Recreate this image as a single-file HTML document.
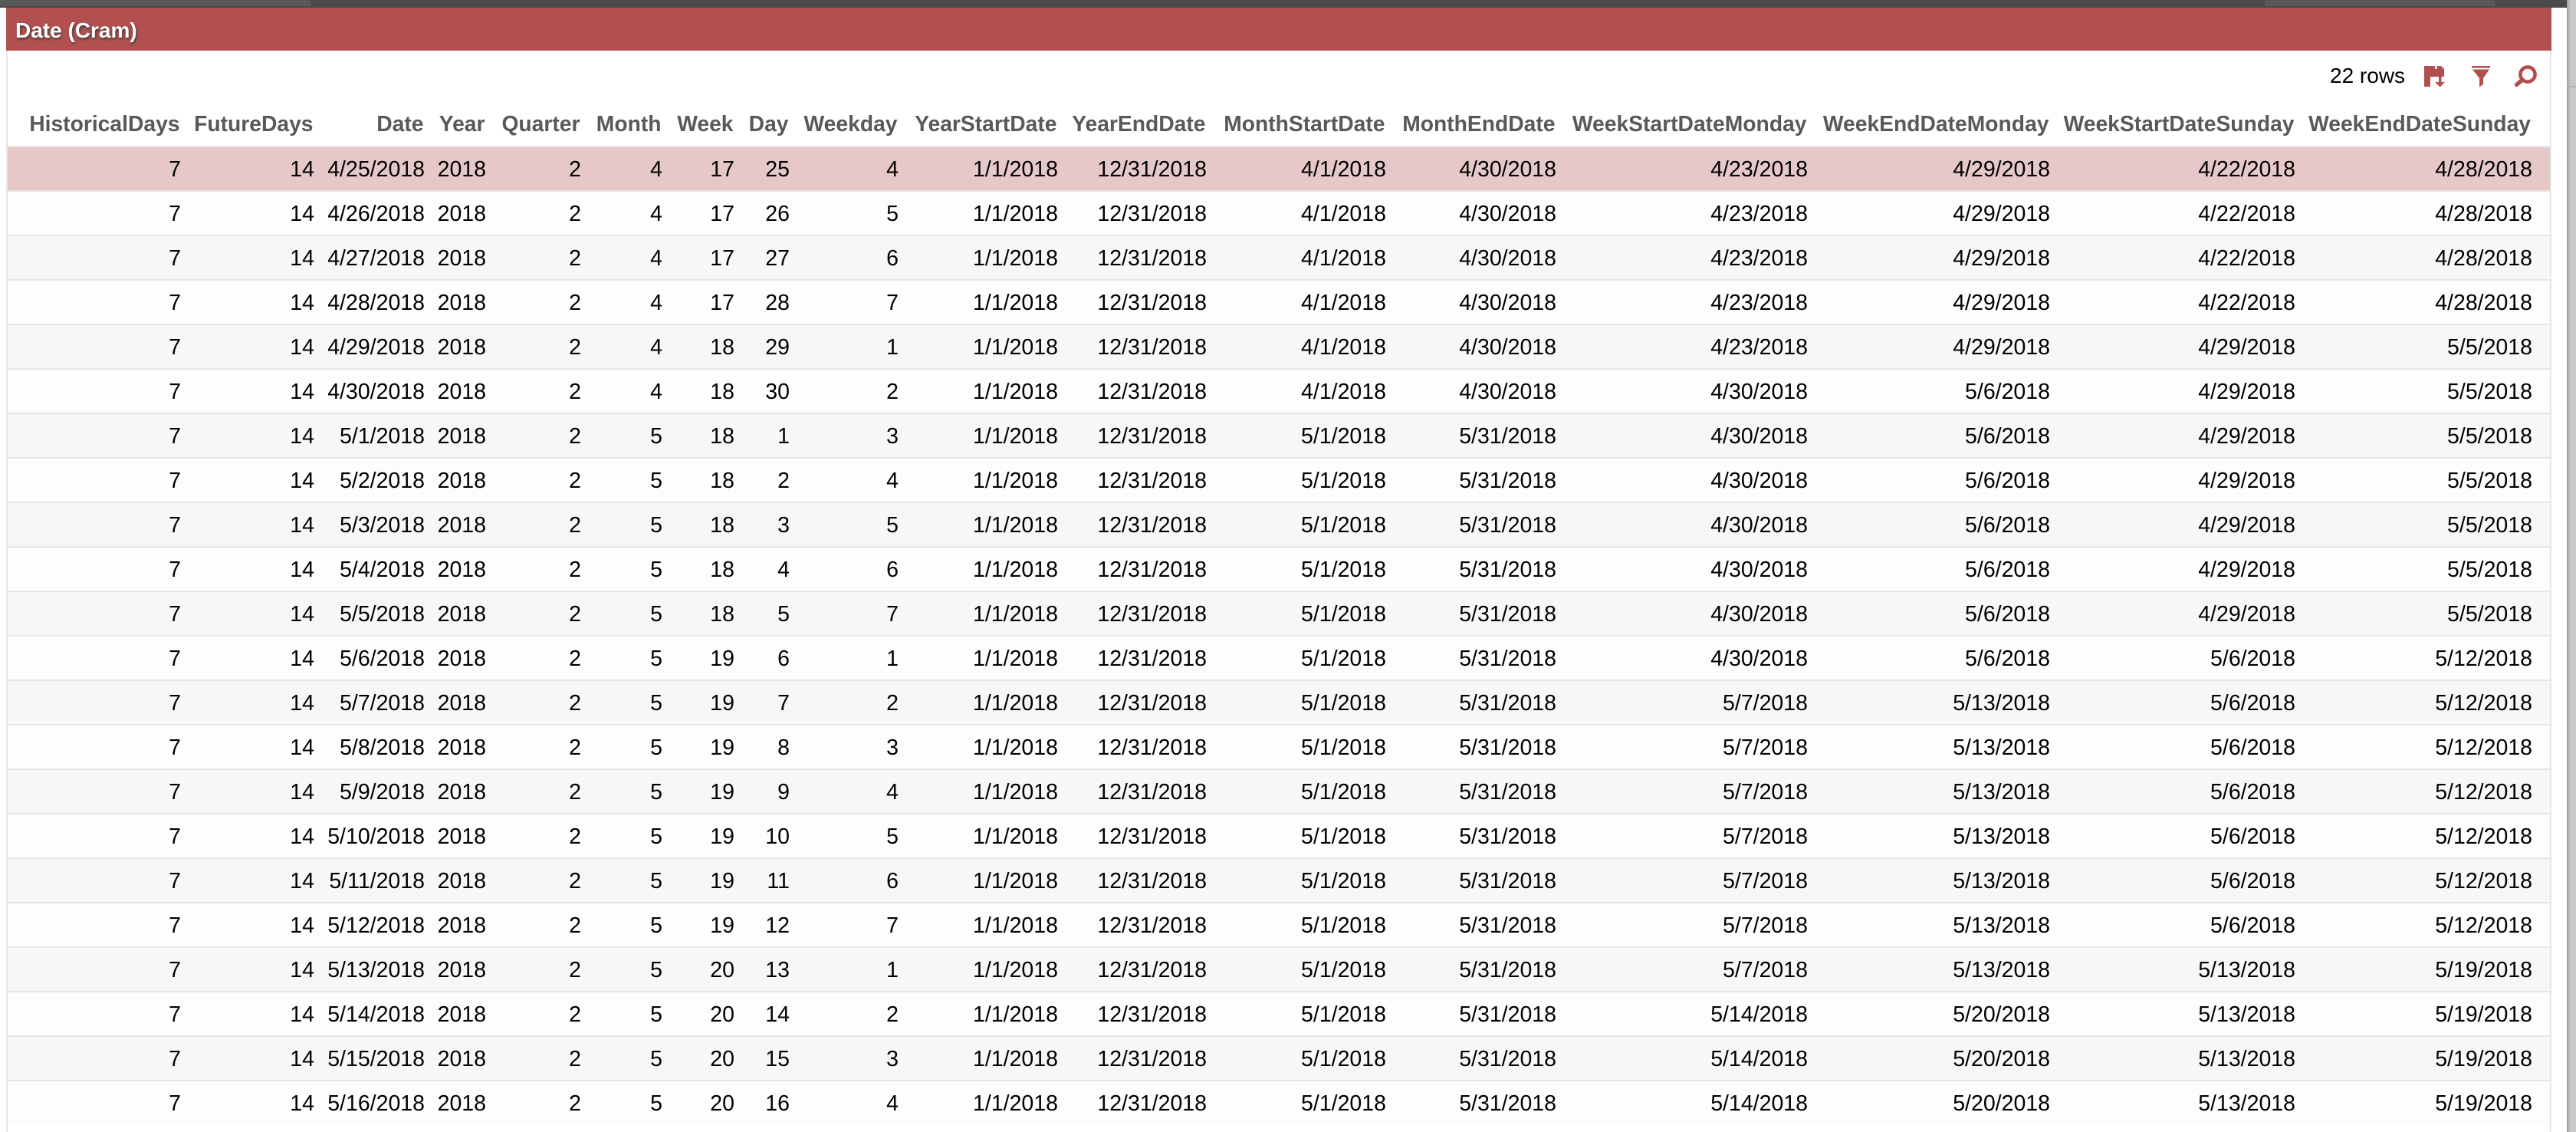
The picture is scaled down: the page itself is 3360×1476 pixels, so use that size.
<!DOCTYPE html>
<html><head><meta charset="utf-8"><title>Date (Cram)</title>
<style>
html,body{margin:0;padding:0;width:3360px;height:1476px;overflow:hidden;background:#fff;font-family:"Liberation Sans",Arial,sans-serif}
.a{position:absolute}
table{position:absolute;left:10px;top:130px;width:3316px;table-layout:fixed;border-collapse:separate;border-spacing:0}
th{height:60px;padding:2px 8.5px 0 0;text-align:right;font-size:28.25px;font-weight:bold;color:#595959;white-space:nowrap;box-sizing:border-box}
td{height:58px;padding:2px 7px 0 0;border-top:2px solid #e6e6e6;text-align:right;font-size:28.5px;color:#000;white-space:nowrap;box-sizing:border-box;background:#fdfdfd}
th:last-child{padding-right:25px}
td:last-child{padding-right:23px}
tbody tr:nth-child(odd) td{background:#f7f7f7}
tbody tr:first-child td{background:#e7c8c9}
</style></head><body>
<div class="a" style="left:0;top:0;width:3348px;height:10px;background:#4a4a4a"></div>
<div class="a" style="left:0;top:0;width:405px;height:8px;background:#595959"></div>
<div class="a" style="left:2954px;top:0;width:300px;height:8px;background:#595959"></div>
<div class="a" style="left:3348px;top:0;width:12px;height:1476px;background:linear-gradient(90deg,#999 0,#bbb 3px,#c9c9c9 6px,#c9c9c9 100%)"></div>
<div class="a" style="left:3348px;top:112px;width:12px;height:2px;background:#b4b4b4"></div>
<div class="a" style="left:8px;top:10px;width:3320px;height:56px;background:#b25050"></div>
<div class="a" style="left:20px;top:24px;height:32px;line-height:32px;font-size:28px;font-weight:bold;color:#fff;text-shadow:1px 2px 3px #3a3a3a;white-space:nowrap">Date (Cram)</div>
<div class="a" style="left:8px;top:66px;width:2px;height:1410px;background:#e6e6e6"></div>
<div class="a" style="left:3326px;top:66px;width:2px;height:1410px;background:#e6e6e6"></div>
<div class="a" style="left:3039px;top:83px;line-height:32px;font-size:28px;color:#000;white-space:nowrap">22 rows</div>
<svg class="a" style="left:0;top:0" width="3360" height="1476" viewBox="0 0 3360 1476">
<g fill="#b25050">
<path d="M3162 86H3184L3188 90V100H3170V113H3162Z"/>
<rect x="3176" y="86" width="2.5" height="4" fill="#fff"/>
<path d="M3181 100H3184.5V107H3189L3182.7 113.5L3176 107H3181Z"/>
<rect x="3224" y="86" width="24" height="2.5"/>
<path d="M3225 90.5H3247L3239 102V110L3234 113.5V102Z"/>
<circle cx="3297" cy="97" r="9.6" fill="none" stroke="#b25050" stroke-width="4.6"/>
<path d="M3289.5 104.5L3282.5 110.5" fill="none" stroke="#b25050" stroke-width="5.4" stroke-linecap="round"/>
</g></svg>
<table>
<colgroup><col style="width:233px"><col style="width:174px"><col style="width:144px"><col style="width:80px"><col style="width:124px"><col style="width:106px"><col style="width:94px"><col style="width:72px"><col style="width:142px"><col style="width:208px"><col style="width:194px"><col style="width:234px"><col style="width:222px"><col style="width:328px"><col style="width:316px"><col style="width:320px"><col style="width:325px"></colgroup>
<thead><tr><th>HistoricalDays</th><th>FutureDays</th><th>Date</th><th>Year</th><th>Quarter</th><th>Month</th><th>Week</th><th>Day</th><th>Weekday</th><th>YearStartDate</th><th>YearEndDate</th><th>MonthStartDate</th><th>MonthEndDate</th><th>WeekStartDateMonday</th><th>WeekEndDateMonday</th><th>WeekStartDateSunday</th><th>WeekEndDateSunday</th></tr></thead>
<tbody>
<tr><td>7</td><td>14</td><td>4/25/2018</td><td>2018</td><td>2</td><td>4</td><td>17</td><td>25</td><td>4</td><td>1/1/2018</td><td>12/31/2018</td><td>4/1/2018</td><td>4/30/2018</td><td>4/23/2018</td><td>4/29/2018</td><td>4/22/2018</td><td>4/28/2018</td></tr>
<tr><td>7</td><td>14</td><td>4/26/2018</td><td>2018</td><td>2</td><td>4</td><td>17</td><td>26</td><td>5</td><td>1/1/2018</td><td>12/31/2018</td><td>4/1/2018</td><td>4/30/2018</td><td>4/23/2018</td><td>4/29/2018</td><td>4/22/2018</td><td>4/28/2018</td></tr>
<tr><td>7</td><td>14</td><td>4/27/2018</td><td>2018</td><td>2</td><td>4</td><td>17</td><td>27</td><td>6</td><td>1/1/2018</td><td>12/31/2018</td><td>4/1/2018</td><td>4/30/2018</td><td>4/23/2018</td><td>4/29/2018</td><td>4/22/2018</td><td>4/28/2018</td></tr>
<tr><td>7</td><td>14</td><td>4/28/2018</td><td>2018</td><td>2</td><td>4</td><td>17</td><td>28</td><td>7</td><td>1/1/2018</td><td>12/31/2018</td><td>4/1/2018</td><td>4/30/2018</td><td>4/23/2018</td><td>4/29/2018</td><td>4/22/2018</td><td>4/28/2018</td></tr>
<tr><td>7</td><td>14</td><td>4/29/2018</td><td>2018</td><td>2</td><td>4</td><td>18</td><td>29</td><td>1</td><td>1/1/2018</td><td>12/31/2018</td><td>4/1/2018</td><td>4/30/2018</td><td>4/23/2018</td><td>4/29/2018</td><td>4/29/2018</td><td>5/5/2018</td></tr>
<tr><td>7</td><td>14</td><td>4/30/2018</td><td>2018</td><td>2</td><td>4</td><td>18</td><td>30</td><td>2</td><td>1/1/2018</td><td>12/31/2018</td><td>4/1/2018</td><td>4/30/2018</td><td>4/30/2018</td><td>5/6/2018</td><td>4/29/2018</td><td>5/5/2018</td></tr>
<tr><td>7</td><td>14</td><td>5/1/2018</td><td>2018</td><td>2</td><td>5</td><td>18</td><td>1</td><td>3</td><td>1/1/2018</td><td>12/31/2018</td><td>5/1/2018</td><td>5/31/2018</td><td>4/30/2018</td><td>5/6/2018</td><td>4/29/2018</td><td>5/5/2018</td></tr>
<tr><td>7</td><td>14</td><td>5/2/2018</td><td>2018</td><td>2</td><td>5</td><td>18</td><td>2</td><td>4</td><td>1/1/2018</td><td>12/31/2018</td><td>5/1/2018</td><td>5/31/2018</td><td>4/30/2018</td><td>5/6/2018</td><td>4/29/2018</td><td>5/5/2018</td></tr>
<tr><td>7</td><td>14</td><td>5/3/2018</td><td>2018</td><td>2</td><td>5</td><td>18</td><td>3</td><td>5</td><td>1/1/2018</td><td>12/31/2018</td><td>5/1/2018</td><td>5/31/2018</td><td>4/30/2018</td><td>5/6/2018</td><td>4/29/2018</td><td>5/5/2018</td></tr>
<tr><td>7</td><td>14</td><td>5/4/2018</td><td>2018</td><td>2</td><td>5</td><td>18</td><td>4</td><td>6</td><td>1/1/2018</td><td>12/31/2018</td><td>5/1/2018</td><td>5/31/2018</td><td>4/30/2018</td><td>5/6/2018</td><td>4/29/2018</td><td>5/5/2018</td></tr>
<tr><td>7</td><td>14</td><td>5/5/2018</td><td>2018</td><td>2</td><td>5</td><td>18</td><td>5</td><td>7</td><td>1/1/2018</td><td>12/31/2018</td><td>5/1/2018</td><td>5/31/2018</td><td>4/30/2018</td><td>5/6/2018</td><td>4/29/2018</td><td>5/5/2018</td></tr>
<tr><td>7</td><td>14</td><td>5/6/2018</td><td>2018</td><td>2</td><td>5</td><td>19</td><td>6</td><td>1</td><td>1/1/2018</td><td>12/31/2018</td><td>5/1/2018</td><td>5/31/2018</td><td>4/30/2018</td><td>5/6/2018</td><td>5/6/2018</td><td>5/12/2018</td></tr>
<tr><td>7</td><td>14</td><td>5/7/2018</td><td>2018</td><td>2</td><td>5</td><td>19</td><td>7</td><td>2</td><td>1/1/2018</td><td>12/31/2018</td><td>5/1/2018</td><td>5/31/2018</td><td>5/7/2018</td><td>5/13/2018</td><td>5/6/2018</td><td>5/12/2018</td></tr>
<tr><td>7</td><td>14</td><td>5/8/2018</td><td>2018</td><td>2</td><td>5</td><td>19</td><td>8</td><td>3</td><td>1/1/2018</td><td>12/31/2018</td><td>5/1/2018</td><td>5/31/2018</td><td>5/7/2018</td><td>5/13/2018</td><td>5/6/2018</td><td>5/12/2018</td></tr>
<tr><td>7</td><td>14</td><td>5/9/2018</td><td>2018</td><td>2</td><td>5</td><td>19</td><td>9</td><td>4</td><td>1/1/2018</td><td>12/31/2018</td><td>5/1/2018</td><td>5/31/2018</td><td>5/7/2018</td><td>5/13/2018</td><td>5/6/2018</td><td>5/12/2018</td></tr>
<tr><td>7</td><td>14</td><td>5/10/2018</td><td>2018</td><td>2</td><td>5</td><td>19</td><td>10</td><td>5</td><td>1/1/2018</td><td>12/31/2018</td><td>5/1/2018</td><td>5/31/2018</td><td>5/7/2018</td><td>5/13/2018</td><td>5/6/2018</td><td>5/12/2018</td></tr>
<tr><td>7</td><td>14</td><td>5/11/2018</td><td>2018</td><td>2</td><td>5</td><td>19</td><td>11</td><td>6</td><td>1/1/2018</td><td>12/31/2018</td><td>5/1/2018</td><td>5/31/2018</td><td>5/7/2018</td><td>5/13/2018</td><td>5/6/2018</td><td>5/12/2018</td></tr>
<tr><td>7</td><td>14</td><td>5/12/2018</td><td>2018</td><td>2</td><td>5</td><td>19</td><td>12</td><td>7</td><td>1/1/2018</td><td>12/31/2018</td><td>5/1/2018</td><td>5/31/2018</td><td>5/7/2018</td><td>5/13/2018</td><td>5/6/2018</td><td>5/12/2018</td></tr>
<tr><td>7</td><td>14</td><td>5/13/2018</td><td>2018</td><td>2</td><td>5</td><td>20</td><td>13</td><td>1</td><td>1/1/2018</td><td>12/31/2018</td><td>5/1/2018</td><td>5/31/2018</td><td>5/7/2018</td><td>5/13/2018</td><td>5/13/2018</td><td>5/19/2018</td></tr>
<tr><td>7</td><td>14</td><td>5/14/2018</td><td>2018</td><td>2</td><td>5</td><td>20</td><td>14</td><td>2</td><td>1/1/2018</td><td>12/31/2018</td><td>5/1/2018</td><td>5/31/2018</td><td>5/14/2018</td><td>5/20/2018</td><td>5/13/2018</td><td>5/19/2018</td></tr>
<tr><td>7</td><td>14</td><td>5/15/2018</td><td>2018</td><td>2</td><td>5</td><td>20</td><td>15</td><td>3</td><td>1/1/2018</td><td>12/31/2018</td><td>5/1/2018</td><td>5/31/2018</td><td>5/14/2018</td><td>5/20/2018</td><td>5/13/2018</td><td>5/19/2018</td></tr>
<tr><td>7</td><td>14</td><td>5/16/2018</td><td>2018</td><td>2</td><td>5</td><td>20</td><td>16</td><td>4</td><td>1/1/2018</td><td>12/31/2018</td><td>5/1/2018</td><td>5/31/2018</td><td>5/14/2018</td><td>5/20/2018</td><td>5/13/2018</td><td>5/19/2018</td></tr>
</tbody></table>
</body></html>
